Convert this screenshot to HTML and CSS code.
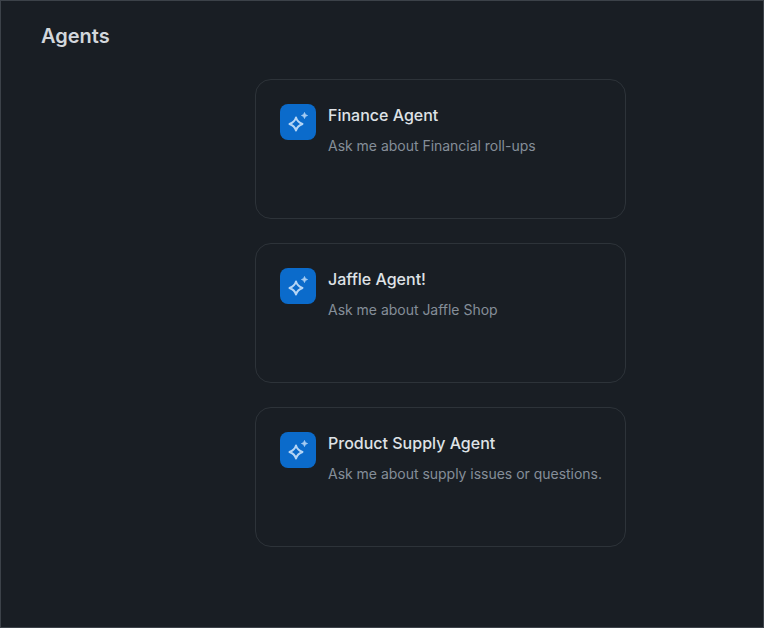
FILE: index.html
```html
<html>
<head>
    <title>Agents</title>
    <link rel="stylesheet" href="styles.css">
</head>
<body>
    <div class="page">
        <h1 class="page-title">Agents</h1>
        <div class="agent-list">
            <div class="agent-card">
                <div class="agent-icon">
                    <svg width="36" height="36" viewBox="0 0 36 36">
                        <path class="spark-big" d="M16 13.5 C17 17 18.5 18.5 22.5 20 C18.5 21.5 17 23 16 26.5 C15 23 13.5 21.5 9.5 20 C13.5 18.5 15 17 16 13.5 Z"/>
                        <path class="spark-small" d="M24.5 8.5 C25.1 10.2 25.8 10.9 27.5 11.5 C25.8 12.1 25.1 12.8 24.5 14.5 C23.9 12.8 23.2 12.1 21.5 11.5 C23.2 10.9 23.9 10.2 24.5 8.5 Z"/>
                    </svg>
                </div>
                <div class="agent-text">
                    <div class="agent-name">Finance Agent</div>
                    <div class="agent-desc">Ask me about Financial roll-ups</div>
                </div>
            </div>
            <div class="agent-card">
                <div class="agent-icon">
                    <svg width="36" height="36" viewBox="0 0 36 36">
                        <path class="spark-big" d="M16 13.5 C17 17 18.5 18.5 22.5 20 C18.5 21.5 17 23 16 26.5 C15 23 13.5 21.5 9.5 20 C13.5 18.5 15 17 16 13.5 Z"/>
                        <path class="spark-small" d="M24.5 8.5 C25.1 10.2 25.8 10.9 27.5 11.5 C25.8 12.1 25.1 12.8 24.5 14.5 C23.9 12.8 23.2 12.1 21.5 11.5 C23.2 10.9 23.9 10.2 24.5 8.5 Z"/>
                    </svg>
                </div>
                <div class="agent-text">
                    <div class="agent-name">Jaffle Agent!</div>
                    <div class="agent-desc">Ask me about Jaffle Shop</div>
                </div>
            </div>
            <div class="agent-card">
                <div class="agent-icon">
                    <svg width="36" height="36" viewBox="0 0 36 36">
                        <path class="spark-big" d="M16 13.5 C17 17 18.5 18.5 22.5 20 C18.5 21.5 17 23 16 26.5 C15 23 13.5 21.5 9.5 20 C13.5 18.5 15 17 16 13.5 Z"/>
                        <path class="spark-small" d="M24.5 8.5 C25.1 10.2 25.8 10.9 27.5 11.5 C25.8 12.1 25.1 12.8 24.5 14.5 C23.9 12.8 23.2 12.1 21.5 11.5 C23.2 10.9 23.9 10.2 24.5 8.5 Z"/>
                    </svg>
                </div>
                <div class="agent-text">
                    <div class="agent-name">Product Supply Agent</div>
                    <div class="agent-desc">Ask me about supply issues or questions.</div>
                </div>
            </div>
        </div>
    </div>
</body>
</html>
```

FILE: styles.css
```css
html, body {
    margin: 0;
    height: 100%;
}
body {
    background: #191e24;
    font-family: Inter, "Liberation Sans", sans-serif;
}
.page {
    box-sizing: border-box;
    height: 628px;
    border: 1px solid #3c4249;
    padding: 22px 40px;
}
.page-title {
    margin: 0;
    font-size: 20px;
    line-height: 26px;
    font-weight: 600;
    color: #d3d7dc;
}
.agent-list {
    display: flex;
    flex-direction: column;
    gap: 24px;
    width: 371px;
    margin: 30px 0 0 214px;
}
.agent-card {
    box-sizing: border-box;
    display: flex;
    gap: 12px;
    height: 140px;
    padding: 24px;
    border: 1px solid #2d3339;
    border-radius: 16px;
}
.agent-icon {
    flex: none;
    width: 36px;
    height: 36px;
    border-radius: 8px;
    background: #0b6bcb;
}
.agent-icon svg {
    display: block;
}
.spark-big {
    fill: none;
    stroke: #b5d5f5;
    stroke-width: 2;
    stroke-linejoin: round;
}
.spark-small {
    fill: #a5cbf2;
    stroke: #a5cbf2;
    stroke-width: 0.8;
    stroke-linejoin: round;
}
.agent-name {
    margin-top: -1px;
    font-size: 16px;
    line-height: 24px;
    font-weight: 500;
    color: #dfe2e6;
}
.agent-desc {
    margin-top: 9px;
    font-size: 14px;
    line-height: 20px;
    letter-spacing: -0.02px;
    white-space: nowrap;
    color: #858e99;
}
```
